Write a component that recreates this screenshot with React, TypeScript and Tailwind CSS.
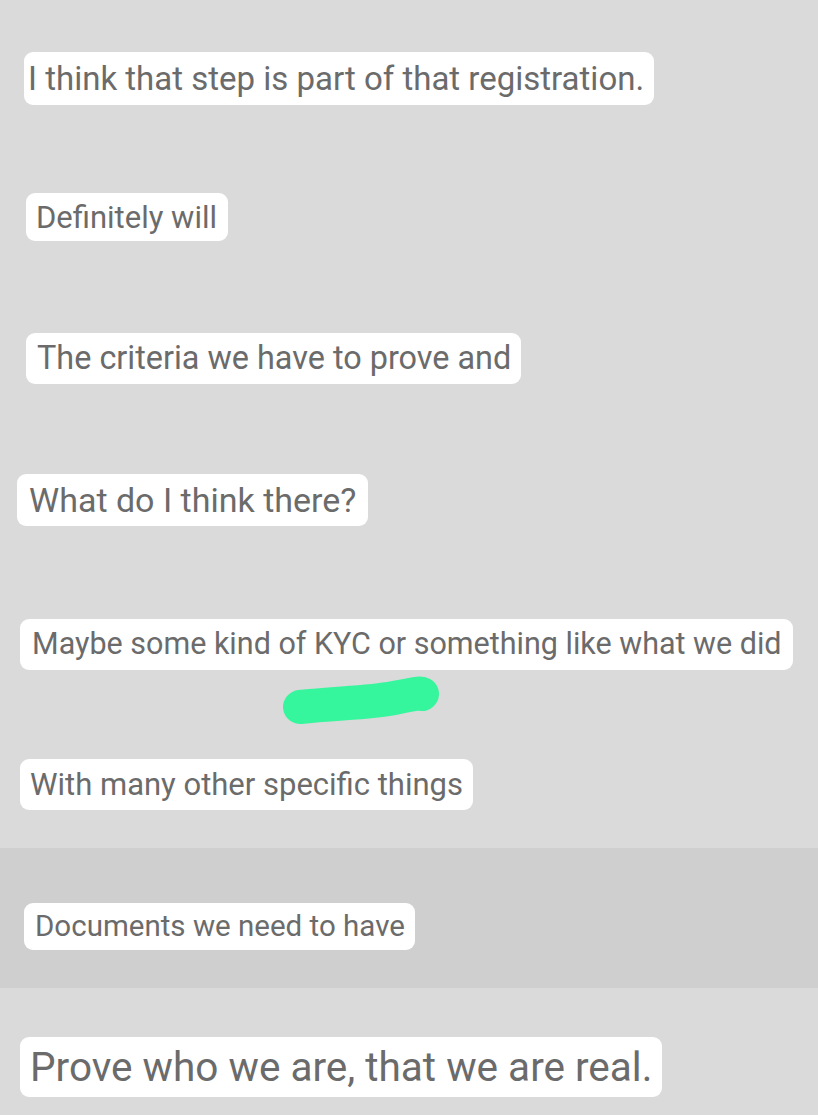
import React from 'react';

function Bubble({ text, className }: { text: string; className: string }) {
  return (
    <div className={`self-start bg-white rounded-[9px] text-[#6b6b6b] font-normal leading-none flex items-center ${className}`}>
      {text}
    </div>
  );
}

export default function App() {
  return (
    <div
      className="w-[818px] h-[1115px] overflow-hidden bg-[#dadada] flex flex-col"
      style={{ fontFamily: 'Roboto, "Noto Sans", sans-serif' }}
    >
      <div className="flex flex-col pt-[52px]">
        <Bubble text="I think that step is part of that registration." className="ml-[24px] h-[53px] pl-[4px] pr-[10px] text-[33px]" />
        <Bubble text="Definitely will" className="ml-[26px] mt-[88px] h-[48px] pl-[10px] pr-[11px] text-[31px]" />
        <Bubble text="The criteria we have to prove and" className="ml-[26px] mt-[92px] h-[51px] pl-[11px] pr-[10px] text-[32.4px]" />
        <Bubble text="What do I think there?" className="ml-[17px] mt-[90px] h-[52px] pl-[12px] pr-[12px] text-[34px]" />
        <Bubble text="Maybe some kind of KYC or something like what we did" className="ml-[20px] mt-[93px] h-[51px] pl-[12px] pr-[11px] text-[30.5px]" />
        <svg width="170" height="52" viewBox="0 0 170 52" className="ml-[274px] mt-[6px] -mb-[20px]">
          <path d="M26 31 C 60 27, 95 27, 120 22 S 146 17, 148 18" stroke="#35f69c" strokeWidth="34" strokeLinecap="round" fill="none" />
        </svg>
        <Bubble text="With many other specific things" className="ml-[20px] mt-[51px] h-[51px] pl-[10px] pr-[10px] text-[31px]" />
      </div>
      <div className="mt-[38px] h-[140px] bg-[#cfcfcf] flex flex-col pt-[55px]">
        <Bubble text="Documents we need to have" className="ml-[24px] h-[47px] pl-[11px] pr-[10px] text-[29.5px]" />
      </div>
      <div className="flex flex-col pt-[49px]">
        <Bubble text="Prove who we are, that we are real." className="ml-[20px] h-[60px] pl-[10px] pr-[10px] text-[40.5px]" />
      </div>
    </div>
  );
}
